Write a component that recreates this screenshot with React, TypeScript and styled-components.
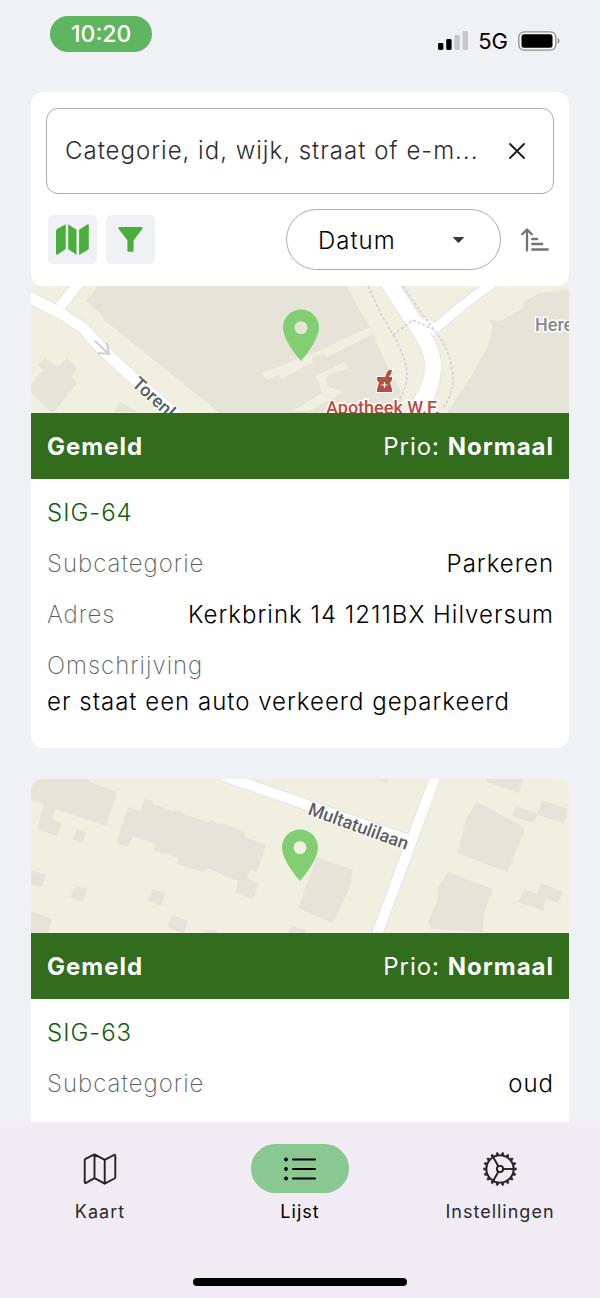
import React from 'react';
import styled, { createGlobalStyle } from 'styled-components';

const colors = {
  page: '#f0f1f4',
  surface: '#ffffff',
  nav: '#f1ecf4',
  navActive: '#8ac893',
  band: '#316d1c',
  link: '#12600f',
  accent: '#4aaf3a',
  clock: '#5fb560',
  border: '#a9adaf',
  text: '#000000',
  muted: '#5c5e5e',
  land: '#f1efe0',
  building: '#e6e4d9',
};

const GlobalStyle = createGlobalStyle`
  *, *::before, *::after { box-sizing: border-box; }
  body { margin: 0; background: ${colors.page}; }
  body, input, select, button {
    font-family: Inter, "Liberation Sans", sans-serif;
    color: ${colors.text};
  }
`;

const Screen = styled.div`
  display: flex;
  flex-direction: column;
  height: 100vh;
  overflow: hidden;
  background: ${colors.page};
`;

const StatusBar = styled.header`
  display: flex;
  align-items: flex-start;
  justify-content: space-between;
  flex: none;
  height: 92px;
  padding: 16px 40px 0 50px;
`;

const Clock = styled.time`
  padding: 0 21px;
  border-radius: 18px;
  background: ${colors.clock};
  color: #fff;
  font-size: 23px;
  font-weight: 500;
  line-height: 36px;
`;

const StatusIcons = styled.div`
  display: flex;
  align-items: center;
  gap: 10px;
  padding-top: 12px;
  font-size: 22px;
  font-weight: 400;
  line-height: 26px;

  svg { display: block; }
`;

const Main = styled.main`
  display: flex;
  flex-direction: column;
  flex: 1;
  min-height: 0;
  padding: 0 31px;
  overflow: hidden;
`;

const SearchPanel = styled.form`
  display: flex;
  flex-direction: column;
  flex: none;
  gap: 15px;
  padding: 16px 15px;
  border-radius: 12px;
  background: ${colors.surface};
`;

const SearchField = styled.div`
  display: flex;
  align-items: center;
  height: 86px;
  padding: 0 27px 0 18px;
  border: 1px solid ${colors.border};
  border-radius: 12px;
`;

const SearchInput = styled.input`
  flex: 1;
  min-width: 0;
  padding: 0;
  border: 0;
  outline: 0;
  background: none;
  font-size: 24px;
  font-weight: 300;
  line-height: 36px;
  letter-spacing: 1px;

  &::placeholder { color: #2c2c2e; opacity: 1; }
`;

const PlainButton = styled.button`
  display: grid;
  place-items: center;
  flex: none;
  padding: 0;
  border: 0;
  background: none;
  cursor: pointer;

  svg { display: block; }
`;

const Toolbar = styled.div`
  display: flex;
  align-items: center;
  gap: 9px;
  padding: 0 5px 0 2px;
`;

const ToolButton = styled(PlainButton)`
  width: 49px;
  height: 49px;
  border-radius: 5px;
  background: ${colors.page};
`;

const SortSelect = styled.label`
  display: flex;
  align-items: center;
  position: relative;
  width: 215px;
  height: 61px;
  margin: 0 11px 0 auto;

  svg { position: absolute; right: 37px; pointer-events: none; }
`;

const Select = styled.select`
  appearance: none;
  width: 100%;
  height: 100%;
  padding: 2px 56px 0 31px;
  border: 1px solid ${colors.border};
  border-radius: 31px;
  background: none;
  font-size: 24px;
  font-weight: 300;
  letter-spacing: 1px;
`;

const List = styled.section`
  display: flex;
  flex-direction: column;
  flex: 1;
  min-height: 0;
  gap: 31px;
`;

const Card = styled.article<{ $scrolledUnder?: boolean; $fill?: boolean }>`
  display: flex;
  flex-direction: column;
  flex: ${(p) => (p.$fill ? '1 0 auto' : 'none')};
  border-radius: ${(p) => (p.$scrolledUnder ? '0 0 12px 12px' : '12px 12px 0 0')};
  background: ${colors.surface};
  overflow: hidden;
`;

const MapView = styled.svg<{ $height: number }>`
  display: block;
  width: 100%;
  height: ${(p) => p.$height}px;
  background: ${colors.land};
  font-family: Roboto, sans-serif;
  font-weight: 500;
  paint-order: stroke;
`;

const Band = styled.div`
  display: flex;
  align-items: center;
  justify-content: space-between;
  height: 66px;
  padding: 0 15px 0 16px;
  background: ${colors.band};
  color: #fff;
  font-size: 24px;
  letter-spacing: 1px;

  h2 { margin: 0; font-size: 24px; font-weight: 700; }
  b { font-weight: 700; }
`;

const CardBody = styled.div`
  display: flex;
  flex-direction: column;
  gap: 15px;
  padding: 16px 15px 28px 16px;
  font-size: 24px;
  font-weight: 300;
  line-height: 36px;
  letter-spacing: 1px;
`;

const ReportLink = styled.a`
  align-self: flex-start;
  color: ${colors.link};
  text-decoration: none;
`;

const Details = styled.dl`
  display: flex;
  flex-direction: column;
  gap: 15px;
  margin: 0;
`;

const Detail = styled.div<{ $stacked?: boolean }>`
  display: flex;
  flex-direction: ${(p) => (p.$stacked ? 'column' : 'row')};
  justify-content: space-between;

  dt { color: ${colors.muted}; font-weight: 200; }
  dd { margin: 0; }
`;

const BottomBar = styled.footer`
  display: flex;
  flex-direction: column;
  align-items: center;
  justify-content: space-between;
  flex: none;
  height: 176px;
  padding: 22px 0 12px;
  background: ${colors.nav};
`;

const Tabs = styled.nav`
  display: grid;
  grid-template-columns: repeat(3, 1fr);
  width: 100%;
`;

const Tab = styled.a`
  display: flex;
  flex-direction: column;
  align-items: center;
  gap: 7px;
  color: #2b2b2d;
  font-size: 18px;
  line-height: 24px;
  letter-spacing: 1px;
  text-decoration: none;

  &[aria-current] { color: #000; }
`;

const TabIcon = styled.span<{ $active?: boolean }>`
  display: grid;
  place-items: center;
  width: 98px;
  height: 49px;
  border-radius: 25px;
  background: ${(p) => (p.$active ? colors.navActive : 'transparent')};

  svg { display: block; }
`;

const HomeIndicator = styled.div`
  width: 214px;
  height: 8px;
  border-radius: 4px;
  background: #000;
`;

const SignalIcon = () => (
  <svg width="30" height="20" viewBox="0 0 30 20" aria-hidden="true">
    <rect x="0" y="12" width="5.4" height="7" rx="1.4" fill="#000" />
    <rect x="8.2" y="8" width="5.4" height="11" rx="1.4" fill="#000" />
    <rect x="16.4" y="4" width="5.4" height="15" rx="1.4" fill="#c3c8c5" />
    <rect x="24.6" y="0" width="5.4" height="19" rx="1.4" fill="#c3c8c5" />
  </svg>
);

const BatteryIcon = () => (
  <svg width="42" height="20" viewBox="0 0 42 20" aria-hidden="true">
    <rect x="0.8" y="0.8" width="37" height="18.4" rx="5.5" fill="#f8f9f8" stroke="#8b8f8c" strokeWidth="1.3" />
    <rect x="3.500" y="3.200" width="31" height="13.600" rx="2.500" fill="#000" />
    <path d="M39.6 7v6c1.2-.5 1.9-1.6 1.9-3s-.7-2.500-1.900-3z" fill="#8b8f8c" />
  </svg>
);

const CloseIcon = () => (
  <svg width="18" height="18" viewBox="0 0 18 18" aria-hidden="true">
    <path d="M2 2l14 14M16 2L2 16" fill="none" stroke="#1d1d1f" strokeWidth="1.9" strokeLinecap="round" />
  </svg>
);

const MapFilledIcon = () => (
  <svg width="33" height="31" viewBox="0 0 33 31" aria-hidden="true" fill={colors.accent}>
    <path d="M9.700.3v24.800L1.600 30.600c-.9.500-1.600.1-1.600-.8V7.200c0-.9.400-1.600 1.200-2.100z" />
    <path d="M12.200.3l8.300 5.400v25.100l-8.300-5.500z" />
    <path d="M23.100 5.700l8.200-5.200c.9-.5 1.500-.1 1.500.8v22.900c0 .8-.4 1.400-1.100 1.900l-8.600 4.900z" />
  </svg>
);

const FilterIcon = () => (
  <svg width="25" height="25" viewBox="0 0 25 25" aria-hidden="true">
    <path
      d="M1.500 0h22c1.100 0 1.500 1.200.8 2L15.600 13.200v10.400c0 .7-.4 1.100-1.100 1.100h-4c-.7 0-1.100-.4-1.100-1.100V13.200L.7 2C0 1.200.4 0 1.500 0z"
      fill={colors.accent}
    />
  </svg>
);

const CaretIcon = () => (
  <svg width="11" height="6" viewBox="0 0 11 6" aria-hidden="true">
    <path d="M.6 0h9.800c.5 0 .7.500.3.800L6.200 5.400c-.4.400-1 .4-1.400 0L.3.800C-.1.500.1 0 .6 0z" fill="#39393b" />
  </svg>
);

const SortIcon = () => (
  <svg width="28" height="24" viewBox="0 0 28 24" aria-hidden="true">
    <g fill="none" stroke="#727474" strokeWidth="2.300" strokeLinecap="round" strokeLinejoin="round">
      <path d="M6 22.500V1.500M1.200 6.300L6 1.500l4.800 4.800" />
      <path d="M11.200 11h5M11.200 16h10M11.200 21.500h15.600" />
    </g>
  </svg>
);

const MapOutlineIcon = () => (
  <svg width="34" height="32" viewBox="0 0 34 32" aria-hidden="true">
    <path
      d="M1.700 7.200c0-.6.300-1 .8-1.300L11.500 1.300l10.200 5.600 9.200-4.900c.8-.5 1.400-.1 1.400.8v21.400c0 .6-.3 1-.8 1.300l-9.800 5.200-10.200-5.600-8.400 4.800c-.8.500-1.400.1-1.400-.8zM11.500 1.300v23.800M21.700 6.900v23.800"
      fill="none"
      stroke="#222224"
      strokeWidth="1.900"
      strokeLinejoin="round"
    />
  </svg>
);

const ListIcon = () => (
  <svg width="32" height="24" viewBox="0 0 32 24" aria-hidden="true">
    {[2.500, 12, 21.500].map((y) => (
      <g key={y}>
        <circle cx="2" cy={y} r="1.900" />
        <path d={`M9 ${y}h22`} stroke="#000" strokeWidth="2" strokeLinecap="round" />
      </g>
    ))}
  </svg>
);

const GearIcon = () => (
  <svg width="34" height="34" viewBox="-17 -17 34 34" aria-hidden="true">
    <g fill="none" stroke="#222224" strokeWidth="1.900">
      <circle r="13.600" />
      <circle r="3.100" />
      {[0, 120, 240].map((a) => (
        <path key={a} d="M3 0H13.800" transform={`rotate(${a})`} />
      ))}
      {Array.from({ length: 18 }, (_, i) => (
        <path key={i} d="M14.200 -1.500L16.600 -.6V.6L14.200 1.500" transform={`rotate(${i * 20})`} fill="#222224" strokeWidth=".6" />
      ))}
    </g>
  </svg>
);

const Pin = ({ x, y }: { x: number; y: number }) => (
  <path
    transform={`translate(${x} ${y}) scale(2.570)`}
    d="M0-20c-3.870 0-7 3.130-7 7 0 5.250 7 13 7 13s7-7.750 7-13c0-3.870-3.130-7-7-7zm0 9.500a2.500 2.500 0 1 1 0-5 2.500 2.500 0 0 1 0 5z"
    fill="#82cf73"
  />
);

const Road = ({ d, width }: { d: string; width: number }) => (
  <g fill="none" strokeLinejoin="round">
    <path d={d} stroke="#e5e5e6" strokeWidth={width + 2} />
    <path d={d} stroke="#fff" strokeWidth={width} />
  </g>
);

const CentreMap = () => (
  <MapView $height={127} viewBox="0 0 538 127" preserveAspectRatio="xMidYMid slice" role="img" aria-label="Kaart">
    <g fill={colors.building}>
      <path d="M67 0L55 15l16 14 2 5 116 93H372L369 104 356 80 340 43 323 14 316 0z" />
      <path d="M14 72l-8 7 6 5-12 15v7l21 21 4-3 21-27-5-6 5-9-10-10-9 9zM89 116l-6 10h24z" />
      <path d="M538 4l-29 3-17 9v6l-23 13-10-1 3 8-6 20-17 30-23 35h122z" />
    </g>
    <g fill={colors.land}>
      <path d="M231 87L236 94 247 89 251 93 282 76 281 72 292 67 296 71 342 48 340 42 334 43 290 64 262 75z" />
      <path d="M284 90L314 76 317 83 303 86Q295 89 295 95 296 101 303 103L313 106 278 125H262L291 107 288 97z" />
    </g>
    <Road d="M22 29L49-4" width={10} />
    <Road d="M-6 9L29 27 52 42 72 64l30 28 47 40" width={11} />
    <Road d="M463-4L432 19 398 48" width={9} />
    <Road d="M356-6L378 28q24 34 24 50 0 22-10 35l-12 20" width={16} />
    <path d="M22 28l10-8M391 36l14 8" stroke="#fff" strokeWidth="9" />
    <g fill="none" stroke="#cfced8" strokeWidth="1.500" strokeDasharray="3 2">
      <path d="M337 0l12 26 13 23q14 24 14 40 0 12-8 25M362 49l20-15 22 10M372 0l20 29 20 27q10 20 10 38 0 14-10 28" />
    </g>
    <path d="M64 55l14 13M76 57l2 11-11-1" fill="none" stroke="#cfcfcf" strokeWidth="2" />
    <text transform="translate(100 99) rotate(42)" fontSize="18" fill="#59605f" stroke="#fff" strokeWidth="2">Torenl</text>
    <text x="504" y="45" fontSize="18" fill="#858b88" stroke="#fff" strokeWidth="3">Here</text>
    <g fill="#b34f43" stroke="#fff" strokeWidth="2">
      <path d="M354 91l2-5q2-3 5-2l-1 4-3 4zM346 91h15v3l-2 3 2 6v3h-15v-3l2-6-2-3z" />
      <path d="M353.500 96v6M350.500 99h6" strokeWidth="1.200" />
    </g>
    <text x="295" y="128" fontSize="18" fill="#b84b42" stroke="#fff" strokeWidth="3">Apotheek W.F.</text>
    <Pin x={270} y={75} />
  </MapView>
);

const StreetMap = () => (
  <MapView $height={154} viewBox="0 0 538 154" preserveAspectRatio="xMidYMid slice" role="img" aria-label="Kaart">
    <g fill={colors.building}>
      <path d="M0 0H57l2 3 27 10-11 34-51-17-3 10 10 4-5 13-20-7 7-25-13-4zM46 50l9 3-4 11-9-4z" />
      <path d="M97 28l12 4 5-13 8 3v3l20 7 6-1 3 3 25 9 5-2 5 4 5-1 23 9-1 5 22 8-9 27-7-2-3 8 12 6-6 15-18-6 3-12-13-5-17-8-5 4-26-8 1-6-25-8 3-6-23-8-5 11-12-4z" />
      <path d="M0 91l15 5-4 12-11-2zM45 107l11 3-4 13-13-5zM121 110l14 4-5 13-13-5zM0 132l21 8-3 14H0zM141 136l16 6-4 12-10-3-7-3zM174 151l10 0 3 3h-15zM261 147l14 4v3h-18z" />
      <path d="M286 78l36 13-3 17-7 15-10 21-35-15 10-28zM343 0h14l-1 4zM446 23l47 25v6l-17 39-50-19 10-36z" />
      <path d="M484 27l22 7 5-13 26 9-4 14-26-8-5 8-21-7zM455 0h38l-5 14-33-11zM417 93l45 17-9 24-1 19-52-3-3-7 10-23v-12z" />
      <path d="M494 110l12 5 4-11 22 9-5 11-12-4-3 12-25-9z" />
    </g>
    <Road d="M190-4L380 62" width={10} />
    <Road d="M405-4L345 158" width={10} />
    <path d="M368 58l14 5" stroke="#fff" strokeWidth="10" />
    <text transform="translate(276 35) rotate(20)" fontSize="18" fill="#5c605f" stroke="#fff" strokeWidth="2">Multatulilaan</text>
    <Pin x={269} y={102} />
  </MapView>
);

const CardBand = () => (
  <Band>
    <h2>Gemeld</h2>
    <span>Prio: <b>Normaal</b></span>
  </Band>
);

export default function App() {
  return (
    <>
      <GlobalStyle />
      <Screen>
        <StatusBar>
          <Clock>10:20</Clock>
          <StatusIcons>
            <SignalIcon />
            <span>5G</span>
            <BatteryIcon />
          </StatusIcons>
        </StatusBar>

        <Main>
          <SearchPanel onSubmit={(e) => e.preventDefault()}>
            <SearchField>
              <SearchInput
                type="text"
                aria-label="Categorie, id, wijk, straat of e-m..."
                placeholder="Categorie, id, wijk, straat of e-m..."
              />
              <PlainButton type="reset" aria-label="Wissen">
                <CloseIcon />
              </PlainButton>
            </SearchField>
            <Toolbar>
              <ToolButton type="button" aria-label="Kaart"><MapFilledIcon /></ToolButton>
              <ToolButton type="button" aria-label="Filter"><FilterIcon /></ToolButton>
              <SortSelect>
                <Select aria-label="Sorteren" defaultValue="datum">
                  <option value="datum">Datum</option>
                </Select>
                <CaretIcon />
              </SortSelect>
              <PlainButton type="button" aria-label="Volgorde"><SortIcon /></PlainButton>
            </Toolbar>
          </SearchPanel>

          <List>
            <Card $scrolledUnder>
              <CentreMap />
              <CardBand />
              <CardBody>
                <ReportLink href="#sig-64">SIG-64</ReportLink>
                <Details>
                  <Detail><dt>Subcategorie</dt><dd>Parkeren</dd></Detail>
                  <Detail><dt>Adres</dt><dd>Kerkbrink 14 1211BX Hilversum</dd></Detail>
                  <Detail $stacked><dt>Omschrijving</dt><dd>er staat een auto verkeerd geparkeerd</dd></Detail>
                </Details>
              </CardBody>
            </Card>
            <Card $fill>
              <StreetMap />
              <CardBand />
              <CardBody>
                <ReportLink href="#sig-63">SIG-63</ReportLink>
                <Details>
                  <Detail><dt>Subcategorie</dt><dd>oud</dd></Detail>
                </Details>
              </CardBody>
            </Card>
          </List>
        </Main>

        <BottomBar>
          <Tabs>
            <Tab href="#kaart"><TabIcon><MapOutlineIcon /></TabIcon>Kaart</Tab>
            <Tab href="#lijst" aria-current="page"><TabIcon $active><ListIcon /></TabIcon>Lijst</Tab>
            <Tab href="#instellingen"><TabIcon><GearIcon /></TabIcon>Instellingen</Tab>
          </Tabs>
          <HomeIndicator />
        </BottomBar>
      </Screen>
    </>
  );
}
